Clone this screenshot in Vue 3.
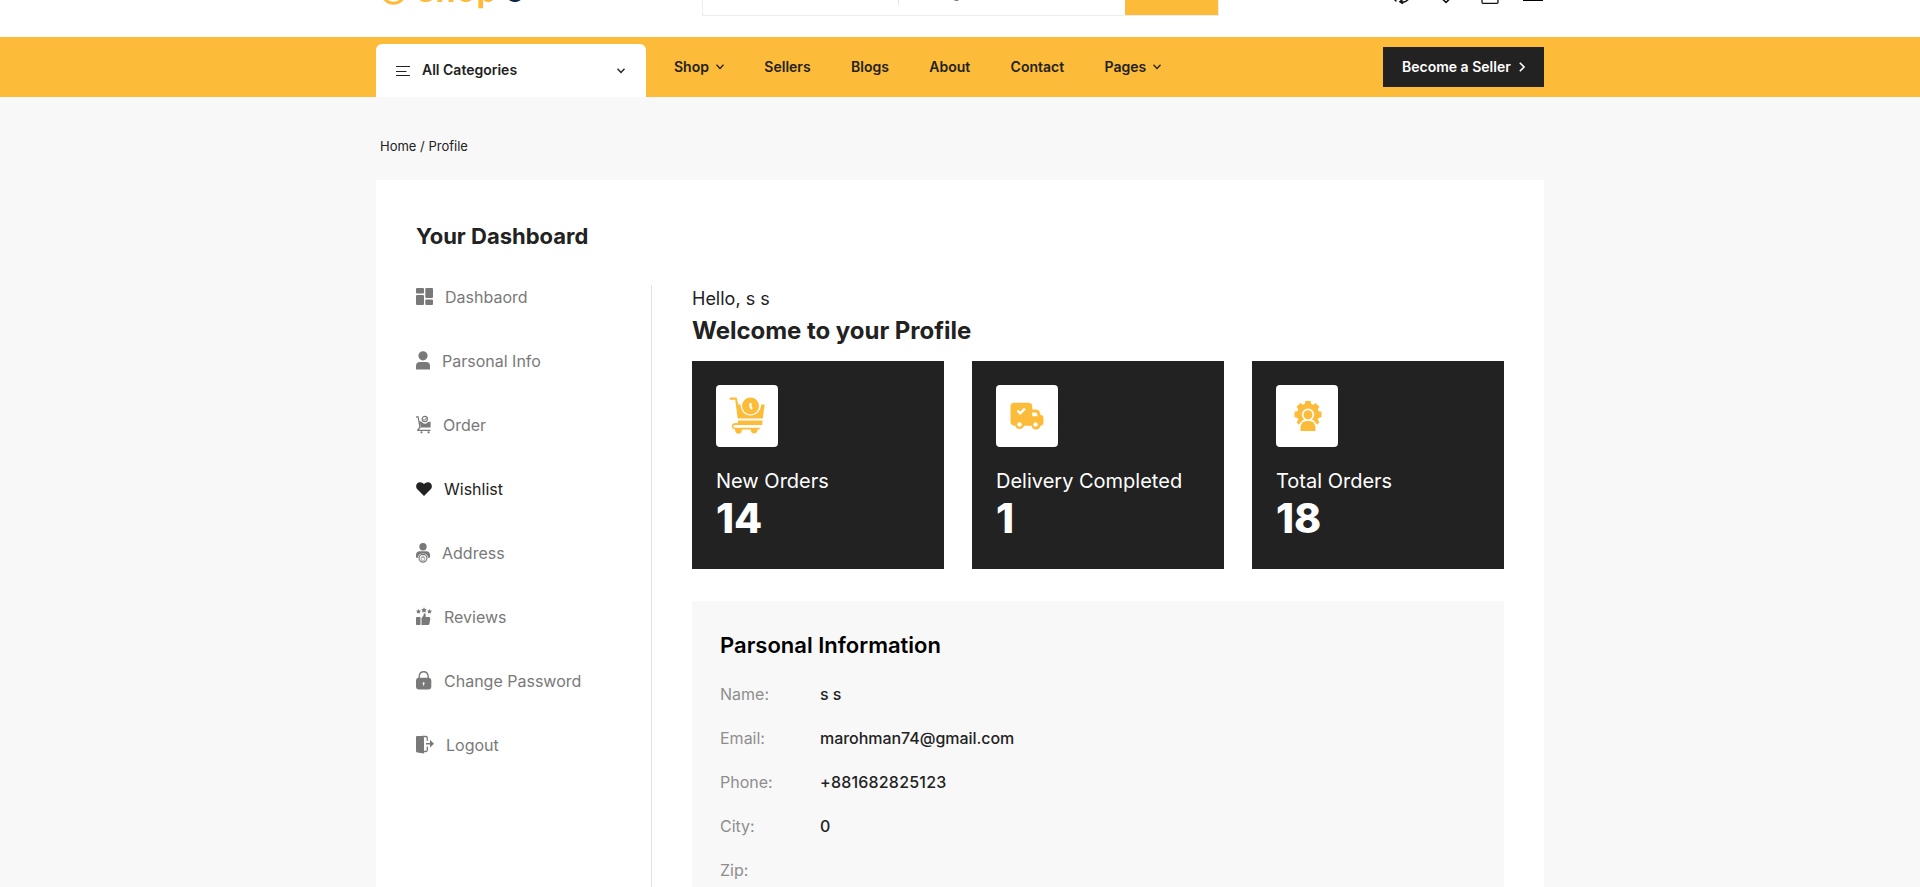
<script setup>
const nav = [
  { label: 'Shop', menu: true },
  { label: 'Sellers' },
  { label: 'Blogs' },
  { label: 'About' },
  { label: 'Contact' },
  { label: 'Pages', menu: true },
]
const side = [
  { id: 'dash', label: 'Dashbaord', w: 17 },
  { id: 'user', label: 'Parsonal Info', w: 14 },
  { id: 'cart', label: 'Order', w: 15 },
  { id: 'heart', label: 'Wishlist', w: 16, active: true },
  { id: 'address', label: 'Address', w: 14 },
  { id: 'review', label: 'Reviews', w: 16 },
  { id: 'lock', label: 'Change Password', w: 16 },
  { id: 'logout', label: 'Logout', w: 18 },
]
const cards = [
  { id: 'new', label: 'New Orders', value: 14 },
  { id: 'truck', label: 'Delivery Completed', value: 1 },
  { id: 'total', label: 'Total Orders', value: 18 },
]
const info = [
  { key: 'Name:', value: 's s' },
  { key: 'Email:', value: 'marohman74@gmail.com' },
  { key: 'Phone:', value: '+881682825123', digits: true },
  { key: 'City:', value: '0' },
  { key: 'Zip:', value: '' },
]
const teeth = [-135, -90, -45, 0, 45, 90, 135]
</script>

<template>
  <div class="page">
    <header class="top">
      <div class="wrap top-row">
        <div class="logo">
          <svg width="27" height="27" viewBox="0 0 27 27" fill="none" stroke="#fcbb38" stroke-width="3"><circle cx="13.5" cy="13.5" r="11.7" /></svg>
          <span class="logo-a">shop</span><span class="logo-b">o</span>
        </div>
        <div class="search">
          <div class="search-input"></div>
          <div class="search-cat">All Categories</div>
          <div class="search-btn"></div>
        </div>
        <div class="actions">
          <svg width="20" height="20" viewBox="0 0 20 20" fill="none" stroke="#111" stroke-width="1.6"><path d="M2 7a8 8 0 0 1 14-3M17.500 13.500a8 8 0 0 1-9 4.200M11 15.200l-3 2.500 3 2M3.800 14.500v3M1.800 16l2-1.500" /></svg>
          <svg class="fav" width="20" height="20" viewBox="0 0 20 20" fill="none" stroke="#111" stroke-width="1.600"><path d="M10 18.500l-8-8a5 5 0 0 1 8-6 5 5 0 0 1 8 6z" stroke-linejoin="round" /></svg>
          <svg class="bag" width="18" height="20" viewBox="0 0 18 20" fill="none" stroke="#111" stroke-width="1.300"><path d="M1 6h16v12.300q0 1-1 1H2q-1 0-1-1z" /></svg>
          <svg class="burger" width="20" height="18" viewBox="0 0 20 18" stroke="#000" stroke-width="2"><path d="M0 2h20M0 9h20M0 17h20" /></svg>
        </div>
      </div>
    </header>

    <nav class="bar">
      <div class="wrap bar-row">
        <div class="cats">
          <svg width="14" height="10" viewBox="0 0 14 10" stroke="#222" stroke-width="1"><path d="M0 .5h14M0 5.500h10.500M0 9.500h14" /></svg>
          <span>All Categories</span>
          <svg class="chev" width="8" height="6" viewBox="0 0 8 6" fill="none" stroke="#222" stroke-width="1.400"><path d="M.5 .8L4 4.500 7.500 .8" /></svg>
        </div>
        <ul class="links">
          <li v-for="n in nav" :key="n.label">
            {{ n.label }}
            <svg v-if="n.menu" width="8" height="6" viewBox="0 0 8 6" fill="none" stroke="#222" stroke-width="1.300"><path d="M.5 .8L4 4.500 7.500 .8" /></svg>
          </li>
        </ul>
        <div class="seller">
          Become a Seller
          <svg width="6" height="10" viewBox="0 0 6 10" fill="none" stroke="#fff" stroke-width="1.600"><path d="M.8 .8L5 5 .8 9.200" /></svg>
        </div>
      </div>
    </nav>

    <main class="wrap">
      <div class="crumb">Home / Profile</div>
      <section class="panel">
        <h1>Your Dashboard</h1>
        <div class="cols">
          <aside>
            <div v-for="s in side" :key="s.id" class="item" :class="{ active: s.active }">
              <svg :width="s.w" height="20" :viewBox="`0 0 ${s.w} 20`" fill="currentColor">
                <template v-if="s.id === 'dash'">
                  <rect x="0" y="1" width="8" height="5.500" rx="1" /><rect x="0" y="8" width="8" height="10" rx="1" />
                  <rect x="9.300" y="1" width="7.700" height="10" rx="1" /><rect x="9.300" y="12.600" width="7.700" height="5.400" rx="1" />
                </template>
                <template v-else-if="s.id === 'user'">
                  <circle cx="7" cy="4.800" r="4.600" /><path d="M0 18.500V15q0-4 4-4h6q4 0 4 4v3.500z" />
                </template>
                <template v-else-if="s.id === 'cart'">
                  <path d="M0 1.200h2.600l2.200 11.400-2 2.200h11.700v1.300H1.200v-1.500l2.100-2.300L1.600 2.400H0z" />
                  <path d="M3.500 6l2 .8q3 3.600 6.300.4l2.800-.6v6H5z" />
                  <circle cx="8.800" cy="4" r="2.600" fill="none" stroke="currentColor" stroke-width="1.200" />
                  <path d="M7.500 4l1.100 1.200 2-2.500" fill="none" stroke="currentColor" />
                  <circle cx="5.500" cy="17.300" r="1.100" /><circle cx="12.600" cy="17.300" r="1.100" />
                </template>
                <path v-else-if="s.id === 'heart'" d="M8 17L1.300 10.300C-.9 8 0 3.200 4.200 3.200Q6.500 3.200 8 5 9.500 3.200 11.800 3.200C16 3.200 16.900 8 14.700 10.300z" />
                <template v-else-if="s.id === 'address'">
                  <circle cx="7" cy="3.700" r="3.700" /><path d="M0 14.700V12q0-3.800 4-3.800h6q4 0 4 3.800v2.700h-2q-.5-4.200-5-4.200t-5 4.200z" />
                  <circle cx="7" cy="15.300" r="3.900" fill="none" stroke="currentColor" stroke-width="1.200" />
                  <path d="M5.300 14.500h3.400v2.800H5.300zM6 14.500v-1q1-1 2 0v1" fill="none" stroke="currentColor" stroke-width=".6" />
                </template>
                <template v-else-if="s.id === 'review'">
                  <path d="M8 .2l.9 1.700 2 .3-1.400 1.500.3 2L8 4.800l-1.800.9.300-2L5.100 2.200l2-.3zM2.500 2l.8 1.500 1.700.3-1.200 1.200.3 1.600-1.600-.7-1.600.7.300-1.600L0 3.800l1.700-.3zM13.500 2l.8 1.500 1.700.3-1.200 1.200.3 1.600-1.600-.7-1.600.7.300-1.600L11 3.800l1.700-.3z" />
                  <rect x="0" y="10" width="4.500" height="8" rx=".8" />
                  <path d="M5.500 18v-7l2-2.300.3-2.500q2-.2 2 1.700L9.600 10H13q1.500 0 1.300 1.500l-.8 5Q13.200 18 12 18z" />
                </template>
                <template v-else-if="s.id === 'lock'">
                  <path d="M3.200 8V5.300Q3.600.7 7.700.7t4.500 4.600V8" fill="none" stroke="currentColor" stroke-width="1.400" />
                  <rect x="0" y="6.700" width="15.300" height="11.800" rx="3" />
                  <circle cx="7.600" cy="12.200" r="1" fill="#fff" /><rect x="7.100" y="12" width="1" height="2.500" fill="#fff" />
                </template>
                <template v-else>
                  <path d="M0 2q0-1 1-1h5.500Q8 1.500 8 3v15.500L1.200 17.600Q0 17.300 0 16z" />
                  <path d="M6 1.500h3.800q1.500 0 1.500 1.500v2.800M11.300 11.500V15q0 1.500-1.500 1.500H8" fill="none" stroke="currentColor" stroke-width="1.300" />
                  <path d="M10 7.900h4V4.800l4 3.900-4 3.900V9.500h-4z" />
                </template>
              </svg>
              <span>{{ s.label }}</span>
            </div>
          </aside>
          <div class="content">
            <p class="hello">Hello, s s</p>
            <h2>Welcome to your Profile</h2>
            <div class="cards">
              <div v-for="c in cards" :key="c.id" class="card">
                <div class="tile">
                  <svg v-if="c.id === 'new'" width="36" height="38" viewBox="0 0 36 38" fill="#fcbb38">
                    <path d="M.7.5h7l1.500 7h2.300C11.500 14 16 18.500 21.500 18.500S31.800 14 32.200 7.500h3.500L33.800 21.500H8.700L6.200 2.700H.7z" />
                    <circle cx="21.500" cy="9" r="8.500" />
                    <path d="M21.500 6v4l1.500 2" fill="none" stroke="#fff" stroke-width="2.200" />
                    <path d="M9 23.500h24.700l-.5 4.500H6q-1.700 0-1.700 1.500T6 30.800h24.700v1.700h-2.200a3.400 3.400 0 1 1-6.700 0h-9a3.400 3.400 0 1 1-6.600 0Q2.800 32 2.800 29.300T6 26h3z" />
                  </svg>
                  <svg v-else-if="c.id === 'truck'" width="34" height="28" viewBox="0 0 34 28">
                    <path fill="#fcbb38" d="M4 .7h14.500q3.700 0 3.700 3.600V7.500H26q3 0 3.800 3l.5 2.300q3.200.5 3.200 3.700v4q0 3-3 3.300a4.600 4.600 0 0 1-9 0h-7.500a4.600 4.600 0 0 1-8.800 0Q.5 23.500.5 20V4.300Q.5.700 4 .7z" />
                    <circle cx="9.500" cy="22.500" r="2.200" fill="#fff" /><circle cx="25.500" cy="22.500" r="2.200" fill="#fff" />
                    <path d="M22.200 14.200V10.500h3q1.600 0 1.900 1.300l.5 2.400z" fill="#fff" />
                    <path d="M7.500 8.500l2.700 2.800 4.800-4.600" fill="none" stroke="#fff" stroke-width="2.400" />
                  </svg>
                  <svg v-else class="gear" width="28" height="32" viewBox="0 0 28 32" fill="#fcbb38">
                    <circle cx="14" cy="14.500" r="11" />
                    <path v-for="t in teeth" :key="t" d="M10.600 5L11.300 1h5.400L17.400 5z" :transform="`rotate(${t} 14 14.500)`" />
                    <path d="M4.500 32V27Q5.200 22 10 19.500a6.200 6.200 0 1 1 8 0Q22.800 22 23.500 27v5z" fill="#fff" />
                    <circle cx="14" cy="14.700" r="4.500" />
                    <path d="M6.500 31V27Q7.500 20.700 14 20.700T21.500 27v4z" />
                  </svg>
                </div>
                <p>{{ c.label }}</p>
                <strong>{{ c.value }}</strong>
              </div>
            </div>
            <div class="info">
              <h3>Parsonal Information</h3>
              <div v-for="r in info" :key="r.key" class="row">
                <span class="key">{{ r.key }}</span><span class="val" :class="{ digits: r.digits }">{{ r.value }}</span>
              </div>
            </div>
          </div>
        </div>
      </section>
    </main>
  </div>
</template>

<style>
body { margin: 0; overflow: hidden; }
</style>

<style scoped>
.page { height: 887px; overflow: hidden; background: #f8f8f8; font-family: Inter, "Liberation Sans", sans-serif; color: #222; }
.page * { box-sizing: border-box; }
h1, h2, h3, p, ul { margin: 0; padding: 0; }
svg { display: block; flex: none; }
.wrap { width: 1168px; margin: 0 auto; }
.top { height: 37px; background: #fff; overflow: hidden; }
.top-row { height: 37px; display: flex; align-items: flex-end; }
.logo { width: 326px; display: flex; align-items: flex-end; padding: 0 0 32px 4px; font-size: 32px; font-weight: 700; line-height: 27px; }
.logo-a { color: #fcbb38; margin: 0 8px 1px 10px; width: 80px; letter-spacing: .7px; }
.logo-b { color: #0b2540; margin-bottom: 1px; }
.search { width: 517px; height: 56px; margin-bottom: 21px; border: 1px solid #ececec; display: flex; align-items: flex-start; flex: none; }
.search-input { width: 196px; height: 44px; border-right: 1px solid #e5e5e5; }
.search-cat { flex: 1; padding-left: 6px; font-size: 13px; line-height: 54px; height: 54px; color: #777; margin-top: 5px; }
.search-btn { width: 93px; height: 54px; background: #fcbb38; }
.actions { margin-left: auto; display: flex; align-items: flex-end; padding-bottom: 33px; }
.fav { margin-left: 24px; }
.bag { margin-left: 25px; }
.burger { margin: 0 1px 3px 24px; }
.bar { height: 60px; background: #fcbb38; }
.bar-row { display: flex; height: 60px; }
.cats { width: 270px; height: 53px; margin-top: 7px; background: #fff; border-radius: 6px 6px 0 0; padding: 0 21px 0 20px; display: flex; align-items: center; font-size: 14px; font-weight: 600; }
.cats span { margin: 0 0 2px 12px; }
.chev { margin-left: auto; }
.links { display: flex; list-style: none; gap: 40.4px; margin-left: 28px; font-size: 14px; font-weight: 600; line-height: 60px; }
.links li { display: flex; align-items: center; gap: 7px; }
.seller { margin: 10px 0 0 auto; width: 161px; height: 40px; background: #222; color: #fff; display: flex; align-items: center; gap: 8px; padding: 0 0 1px 19px; font-size: 14px; font-weight: 600; }
.crumb { height: 83px; padding: 39px 0 0 4px; font-size: 13px; line-height: 20px; }
.panel { background: #fff; height: 800px; padding: 40px; }
h1 { font-size: 22px; font-weight: 700; line-height: 32px; height: 65px; }
.cols { display: flex; }
aside { width: 236px; height: 700px; border-right: 1px solid #e2e2e2; flex: none; }
.item { display: flex; align-items: center; gap: 12px; height: 24px; margin-bottom: 40px; font-size: 16px; line-height: 24px; color: #797979; }
.item.active { color: #222; }
.content { margin-left: 40px; width: 812px; }
.hello { font-size: 18px; line-height: 28px; }
h2 { font-size: 24px; font-weight: 700; line-height: 36px; height: 48px; letter-spacing: -.03px; }
.cards { display: flex; gap: 28px; }
.card { width: 252px; height: 208px; background: #222; color: #fff; padding: 24px; }
.tile { width: 62px; height: 62px; border-radius: 4px; background: #fff; display: flex; align-items: center; justify-content: center; }
.gear { margin-left: 1px; }
.card p { margin-top: 18px; font-size: 20px; line-height: 32px; }
.card strong { display: block; font-size: 41px; font-weight: 800; line-height: 42px; }
.info { margin-top: 32px; height: 400px; background: #f8f8f8; padding: 28px; }
h3 { font-size: 22px; font-weight: 600; line-height: 32px; color: #000; margin-bottom: 21px; }
.row { display: flex; height: 24px; line-height: 24px; margin-bottom: 20px; font-size: 16px; }
.key { width: 100px; color: #8e8e8e; }
.val { font-weight: 500; letter-spacing: -.04px; }
.val.digits { letter-spacing: .2px; }
</style>
